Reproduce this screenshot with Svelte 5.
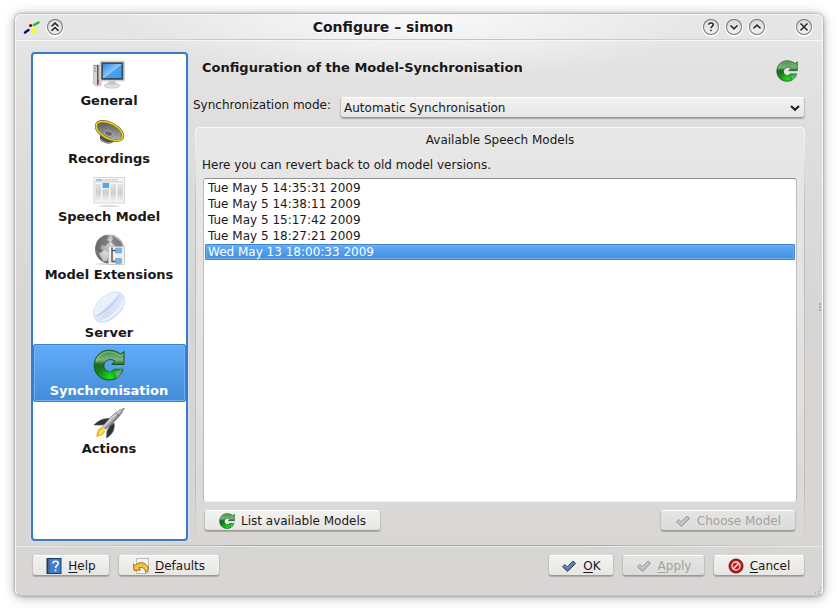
<script>
  let page = $state('Synchronisation');
  let model = $state(4);
  let mode = $state('Automatic Synchronisation');

  const pages = ['General', 'Recordings', 'Speech Model', 'Model Extensions', 'Server', 'Synchronisation', 'Actions'];
  const models = [
    'Tue May 5 14:35:31 2009',
    'Tue May 5 14:38:11 2009',
    'Tue May 5 15:17:42 2009',
    'Tue May 5 18:27:21 2009',
    'Wed May 13 18:00:33 2009'
  ];
</script>

<svg class="defs" width="0" height="0" aria-hidden="true">
  <defs>
    <linearGradient id="green" x1="0" y1="0" x2="0" y2="1">
      <stop offset="0" stop-color="#3f8a46" /><stop offset=".32" stop-color="#79b57a" />
      <stop offset=".48" stop-color="#1d6a20" /><stop offset="1" stop-color="#119611" />
    </linearGradient>
    <radialGradient id="glow" cx="17" cy="28" r="13" gradientUnits="userSpaceOnUse">
      <stop offset="0" stop-color="#1ee01e" /><stop offset="1" stop-color="#1ec01e" stop-opacity="0" />
    </radialGradient>
    <linearGradient id="screen" x1="0" y1="0" x2="1" y2="1">
      <stop offset="0" stop-color="#2f86dc" /><stop offset=".5" stop-color="#8cc6f8" /><stop offset=".55" stop-color="#4ba0ee" /><stop offset="1" stop-color="#3c9af2" />
    </linearGradient>
    <linearGradient id="cone" x1="0" y1="0" x2="1" y2="1">
      <stop offset="0" stop-color="#45454a" /><stop offset=".6" stop-color="#8f8f94" /><stop offset="1" stop-color="#c4c4c8" />
    </linearGradient>
    <linearGradient id="column" x1="0" y1="0" x2="0" y2="1">
      <stop offset="0" stop-color="#e4e4e4" /><stop offset=".5" stop-color="#cfcfcf" /><stop offset="1" stop-color="#f0f0f0" />
    </linearGradient>
    <radialGradient id="globe" cx=".6" cy=".3" r=".7">
      <stop offset="0" stop-color="#dedede" /><stop offset=".6" stop-color="#a5a5a5" /><stop offset="1" stop-color="#686868" />
    </radialGradient>
    <linearGradient id="glass" x1="0" y1="0" x2="1" y2="1">
      <stop offset="0" stop-color="#eef3fd" /><stop offset=".5" stop-color="#d3dff5" /><stop offset="1" stop-color="#e6edfa" />
    </linearGradient>
    <linearGradient id="metal" x1="0" y1="0" x2="1" y2="1">
      <stop offset=".25" stop-color="#55565b" /><stop offset=".45" stop-color="#d2d4d9" /><stop offset=".65" stop-color="#3a3b40" />
    </linearGradient>
  </defs>
</svg>

{#snippet refresh(size)}
  <svg width={size} height={size} viewBox="0 0 32 32" aria-hidden="true">
    <path d="M31 2.500V15.500H18.500L22 12C16.500 8.500 10.800 12 10.800 17C10.800 22.400 17.500 24.200 21 19.800H30C29 26.500 23 31 16.200 31C7.600 31 1.200 25 1.200 16.400C1.200 7.600 7.600 1.200 16 1.200C20.600 1.200 24.400 2.600 27.500 5Z" fill="url(#green)" />
    <path d="M2 17C5 20 11 19.500 11.300 19C13 23 18.500 23.800 21.500 20.500H29.400C28 27 23 30.400 16.200 30.400C8.400 30.400 2 25 2 17Z" fill="url(#glow)" />
    <path d="M30 19.800C29 26.500 23 31 16.200 31C7.600 31 1.200 25 1.200 16.400C1.200 7.600 7.600 1.200 16 1.200C20.600 1.200 24.400 2.600 27.500 5L31 2.500V15.500H18.500L22 12C16.500 8.500 10.800 12 10.800 17C10.800 20 13 21.800 15 22.200" fill="none" stroke="#14591a" />
    <path d="M3 13C5 5.500 12 1.800 18 3C22 3.700 25 5.500 27.500 7L30 5" fill="none" stroke="#b4d8b0" stroke-opacity=".5" />
    <path d="M22 23L29.500 19.800C29 24 27 27 24 29Z" fill="#9fc7c2" opacity=".5" />
  </svg>
{/snippet}

{#snippet check(a, b)}
  <svg width="16" height="16" viewBox="0 0 16 16" aria-hidden="true">
    <path d="M1.500 8.800L3.800 6.500L6.300 8.900L12 3L14.600 5.400L6.500 13.600Z" fill={a} stroke={b} stroke-linejoin="round" />
    <path d="M3 8.600L3.900 7.700L6.400 10.200L12.100 4.300" fill="none" stroke="#fff" stroke-opacity=".3" />
  </svg>
{/snippet}

{#snippet pageIcon(name)}
  {#if name === 'Synchronisation'}
    {@render refresh(32)}
  {:else}
    <svg width="32" height="32" viewBox="0 0 32 32" aria-hidden="true">
      {#if name === 'General'}
        <path d="M.500 6H8V26L4 27.500L.500 25Z" fill="#d4d4d4" stroke="#aaa" stroke-width=".600" />
        <path d="M1 7H4M1 9.500H3M1 12H3" stroke="#777" stroke-width=".800" />
        <path d="M4.800 6V26" stroke="#333" stroke-width="1.200" /><path d="M5 21V24" stroke="#c22" />
        <ellipse cx="19" cy="26.600" rx="8" ry="2.600" fill="#dedede" stroke="#bbb" stroke-width=".600" />
        <path d="M16 21H22L23 26H15Z" fill="#c8c8c8" />
        <rect x="7" y="2" width="24.500" height="20" rx=".800" fill="#dcdcd9" stroke="#b8b8b5" stroke-width=".600" />
        <rect x="8.300" y="3.300" width="22" height="17.500" fill="#37495c" />
        <rect x="10" y="5" width="18.500" height="14" fill="url(#screen)" />
      {:else if name === 'Recordings'}
        <path d="M7 17V22C9 27 20 28 21 24V20Z" fill="#505055" />
        <path d="M8 22C11 26 17 27 20 25" fill="none" stroke="#aaa" />
        <ellipse cx="16.500" cy="14" rx="14.600" ry="7.600" transform="rotate(28 16.500 14)" fill="url(#cone)" stroke="#75620c" stroke-width="2.600" />
        <ellipse cx="16.500" cy="14" rx="14.500" ry="7.500" transform="rotate(28 16.500 14)" fill="none" stroke="#ead42b" stroke-width="1.600" />
        <ellipse cx="15.500" cy="16.500" rx="4.200" ry="2.600" transform="rotate(18 15.500 16.500)" fill="#66676c" stroke="#b6b6b6" stroke-width=".800" />
      {:else if name === 'Speech Model'}
        <ellipse cx="16" cy="31" rx="11" ry=".800" fill="#ccc" />
        <rect x="1" y="2.500" width="30.500" height="25.500" fill="#f6f6f6" stroke="#ccc" stroke-width=".800" />
        <path d="M3 5H9" stroke="#5da2dd" stroke-width="1.200" /><path d="M10 5H25" stroke="#aaa" stroke-dasharray="1.500 .700" /><path d="M2 7H30" stroke="#ccc" />
        <path d="M2.500 9H8V26H2.500ZM9.500 14H16V26H9.500ZM17.500 9H23V26H17.500ZM24.500 9H30V26H24.500Z" fill="url(#column)" />
        <rect x="9.500" y="8" width="6.500" height="5" fill="#62a2dc" />
      {:else if name === 'Model Extensions'}
        <ellipse cx="15" cy="31" rx="13" ry="1" fill="#ddd" />
        <circle cx="16.500" cy="16" r="14.500" fill="url(#globe)" />
        <path d="M4 8C7 4 10 3 12 2L16 3L14 7L17 9L12 13L9 12L7 15L10 18L9 22L5 20L2.500 15Z" fill="#575757" opacity=".65" />
        <path d="M19 2.500L23 5L28 9L30 15L22 13L18 9L20 6Z" fill="#505050" opacity=".6" /><path d="M6 20L12 17L16 20L14 28L10 28Z" fill="#f0f0f0" opacity=".65" />
        <rect x="15.500" y="13.500" width="16" height="18" fill="#eee" stroke="#bcbcbc" stroke-width=".700" />
        <path d="M19 14.500V28.500H23M19 17.500H23" fill="none" stroke="#555" stroke-width="1.400" />
        <rect x="22.500" y="15" width="6" height="5" rx=".700" fill="#7db2e8" stroke="#5d8fc4" stroke-width=".500" /><rect x="22.500" y="25.500" width="6" height="5" rx=".700" fill="#7db2e8" stroke="#5d8fc4" stroke-width=".500" />
      {:else if name === 'Server'}
        <g transform="rotate(-43 16 16)">
          <ellipse cx="16" cy="16" rx="18.500" ry="11.500" fill="url(#glass)" stroke="#cdd8ee" stroke-width=".700" />
          <path d="M-1 13C4 19 27 19 33 13C29 6 22 5 16 5C10 5 3 6 -1 13Z" fill="#e9effb" />
          <path d="M-1.500 13C5 19 27 19 33.500 13C25 15.500 8 15.500 -1.500 13Z" fill="#c3d1ee" />
          <path d="M1 21C9 26 23 26 31 21" fill="none" stroke="#fff" stroke-width="1.500" opacity=".7" />
        </g>
      {:else}
        <path d="M9 20C5 21 4 25 3 30C7 29 11 28 12 24Z" fill="#f6b21b" /><path d="M9 22C7 23 6 25 5.500 28C9 27 10 26 11 23Z" fill="#ffe94e" />
        <path d="M17 11.500C9 11 4 15 1 18L9 18L15 16ZM21 16C22 22 20 27 13.500 31L14 24L17 19Z" fill="#303136" stroke="#55565b" stroke-width=".700" />
        <path d="M31.500 1C25 3 20 7 16 12L9.500 19.500L12.500 22.500L19 17C25 11 29 7 31.500 1Z" fill="url(#metal)" stroke="#6a6b70" stroke-width=".500" />
        <path d="M23 6L26 9" stroke="#555" stroke-width=".800" />
      {/if}
    </svg>
  {/if}
{/snippet}

{#snippet round(label, d)}
  <button class="round" aria-label={label}>
    <svg width="16" height="16" viewBox="0 0 16 16" aria-hidden="true">
      <path {d} fill="none" stroke="#fff" stroke-width="2" transform="translate(0 1)" />
      <path {d} fill="none" stroke="#252525" stroke-width="1.600" />
    </svg>
  </button>
{/snippet}

<div class="desktop">
  <section class="dialog" aria-label="Configure – simon">
    <header class="titlebar">
      <div class="side">
        <svg width="18" height="16" viewBox="0 0 18 16" aria-hidden="true">
          <path d="M2 13.500L5.500 11" stroke="#080870" stroke-width="2.400" stroke-linecap="round" />
          <path d="M11 6L15.500 3.500" stroke="#0bc522" stroke-width="2.400" stroke-linecap="round" />
          <circle cx="7.600" cy="6.500" r="1.600" fill="#7c0808" /><path d="M8.500 11.500L10 9L13 11L12 14H9Z" fill="#f8f82c" stroke="#f8f82c" stroke-linejoin="round" />
        </svg>
        {@render round('Shade', 'M4.500 7.500L8 4.200L11.500 7.500M4.500 11.800L8 8.500L11.500 11.800')}
      </div>
      <h1>Configure – simon</h1>
      <div class="side right">
        {@render round('Help', 'M5.800 5.800C5.800 3.300 10.200 3.300 10.200 5.800C10.200 7.300 8 7.300 8 9.300M8 10.800V12.300')}
        {@render round('Minimize', 'M4.500 6.500L8 9.800L11.500 6.500')}
        {@render round('Maximize', 'M4.500 9.500L8 6.200L11.500 9.500')}
        <span class="gap"></span>
        {@render round('Close', 'M4.500 4.500L11.500 11.500M11.500 4.500L4.500 11.500')}
      </div>
    </header>

    <div class="body">
      <nav>
        {#each pages as name}
          <button class="page" class:active={page === name} onclick={() => (page = name)}>
            {@render pageIcon(name)}
            <span>{name}</span>
          </button>
        {/each}
      </nav>

      <main>
        <div class="heading">
          <h2>Configuration of the Model-Synchronisation</h2>
          {@render refresh(22)}
        </div>
        <div class="mode">
          <label for="mode">Synchronization mode:</label>
          <div class="combo">
            <select id="mode" bind:value={mode}>
              <option>Automatic Synchronisation</option>
              <option>Manual Synchronisation</option>
            </select>
            <svg width="12" height="8" viewBox="0 0 12 8" aria-hidden="true"><path d="M2 2L6 5.800L10 2" fill="none" stroke="#222" stroke-width="2.200" /></svg>
          </div>
        </div>
        <section class="group" aria-labelledby="group-title">
          <h3 id="group-title">Available Speech Models</h3>
          <p>Here you can revert back to old model versions.</p>
          <div class="list">
            {#each models as name, i}
              <button class="row" class:active={model === i} onclick={() => (model = i)}>{name}</button>
            {/each}
          </div>
          <div class="actions">
            <button class="push wide">{@render refresh(16)}List available Models</button>
            <button class="push wide" disabled>{@render check('#bdbdbd', '#989898')}Choose Model</button>
          </div>
        </section>
      </main>
      <span class="grip" aria-hidden="true"></span>
    </div>

    <footer>
      <button class="push help">
        <svg width="16" height="16" viewBox="0 0 16 16" aria-hidden="true">
          <rect x="1" y=".500" width="14" height="15" fill="#3f7fd0" stroke="#1c3c6c" /><rect x="1" y="1" width="3" height="14.500" fill="#243c5c" /><path d="M3 1V15" stroke="#7690b0" />
          <path d="M7 5.500C7 2.500 12.200 2.500 12.200 5.500C12.200 7.500 9.600 7.500 9.600 10M9.600 11.500V13.300" fill="none" stroke="#fff" stroke-width="1.600" />
        </svg>
        <span><u>H</u>elp</span>
      </button>
      <button class="push defaults">
        <svg width="16" height="16" viewBox="0 0 16 16" aria-hidden="true">
          <path d="M3.500 .500H15.500V14L13 15.500H3.500Z" fill="#f3f3f3" stroke="#bbb" />
          <path d="M.600 6L2.500 7.500C5 3.500 13 3.500 15.300 10C15.300 12.500 14 14 12.500 14.500C13 11 9 8.500 6 9.800L7.500 12L1 12.500Z" fill="#f4c33c" stroke="#a36d10" stroke-linejoin="round" />
        </svg>
        <span><u>D</u>efaults</span>
      </button>
      <span class="spacer"></span>
      <button class="push ok">{@render check('#56799c', '#28435f')}<span><u>O</u>K</span></button>
      <button class="push apply" disabled>{@render check('#bdbdbd', '#989898')}<span><u>A</u>pply</span></button>
      <button class="push cancel">
        <svg width="16" height="16" viewBox="0 0 16 16" aria-hidden="true">
          <circle cx="8" cy="8" r="7" fill="#c01a16" stroke="#7c0c0a" />
          <circle cx="8" cy="8" r="4" fill="none" stroke="#f4e4e2" stroke-width="1.300" /><path d="M5 11L11 5" stroke="#f4e4e2" stroke-width="1.600" />
        </svg>
        <span><u>C</u>ancel</span>
      </button>
    </footer>
    <svg class="corner" width="8" height="8" viewBox="0 0 8 8" aria-hidden="true"><path d="M1 6H2M4 4H5M6 1H7M4 7H5M6 5H7" stroke="#999" /></svg>
  </section>
</div>

<style>
  :global(body) { background: #fff; }
  .defs { position: absolute; }
  .desktop {
    box-sizing: border-box;
    min-height: 100vh;
    padding: 14px 14px 15px 15px;
    display: flex;
    font: 12px/16px "DejaVu Sans", sans-serif;
    color: #1a1718;
  }
  button, select { font: inherit; color: inherit; margin: 0; }
  button { border: 0; padding: 0; background: none; }
  svg { flex: none; display: block; }
  .dialog {
    position: relative;
    box-sizing: border-box;
    flex: 1;
    display: flex;
    flex-direction: column;
    min-width: 0;
    border: 1px solid #f5f5f5;
    border-bottom-color: #c4c4c4;
    border-radius: 6px;
    background:
      radial-gradient(ellipse 300px 64px at 50% 0, #fafafa, #fafafa00),
      linear-gradient(#e6e6e6, #dfdedd 120px, #d7d6d4 300px);
    box-shadow: 0 0 3px #888, 0 1px 12px #aaa;
  }
  .titlebar {
    display: grid;
    grid-template-columns: auto 1fr auto;
    align-items: center;
    height: 24px;
    padding: 0 10px 0 7px;
    border-bottom: 1px solid;
    border-image: linear-gradient(90deg, #e0e0e0, #c4c4c4 30%, #c4c4c4 70%, #e0e0e0) 1;
    box-shadow: 0 1px #f6f6f6;
  }
  h1, h2, h3, p { margin: 0; font-size: inherit; }
  h1 { font-size: 14px; text-align: center; text-shadow: 0 1px #fff; }
  h2 { font-size: 13px; }
  .side { display: flex; align-items: center; gap: 6px; }
  .right { justify-content: flex-end; gap: 7px; }
  .gap { width: 17px; }
  .round {
    width: 16px;
    height: 16px;
    border-radius: 50%;
    background: linear-gradient(#dadada, #f0f0f0);
    box-shadow: inset 0 0 0 1px #757575, 0 1px 0 1px #fff;
  }
  .body {
    position: relative;
    flex: 1;
    display: flex;
    gap: 7px;
    padding: 12px 17px 4px 15px;
  }
  nav {
    box-sizing: border-box;
    width: 157px;
    display: flex;
    flex-direction: column;
    border: 2px solid #3c7ac6;
    border-radius: 4px;
    background: #fff;
    box-shadow: 0 0 0 1px #d6dfec;
  }
  .page {
    height: 58px;
    display: flex;
    flex-direction: column;
    align-items: center;
    gap: 2px;
    padding: 5px 1px 0 0;
    box-sizing: border-box;
    font-size: 13px;
    font-weight: bold;
    border-radius: 3px;
  }
  .active {
    color: #fff;
    background: linear-gradient(#62adfb, #438bd7);
    box-shadow: inset 0 0 0 1px #3e7fc8, inset 0 0 0 2px #70b2f5;
  }
  main { flex: 1; display: flex; flex-direction: column; min-width: 0; }
  .heading {
    display: flex;
    justify-content: space-between;
    align-items: center;
    height: 38px;
    padding: 0 7px;
  }
  .heading h2 { padding-bottom: 6px; }
  .mode { display: flex; align-items: flex-start; gap: 9px; margin: 7px 0 9px -2px; }
  .combo { flex: 1; display: grid; align-items: center; }
  .combo > * { grid-area: 1 / 1; }
  .combo svg { justify-self: end; margin-right: 4px; pointer-events: none; }
  select, .push {
    box-sizing: border-box;
    height: 21px;
    border: 1px solid #c3c2c1;
    border-top-color: #fff;
    border-bottom-color: #9a9998;
    border-radius: 4px;
    background: linear-gradient(#f2f2f1, #e7e6e4);
    box-shadow: 0 1px 1px #aaa9a8;
  }
  select { appearance: none; width: 100%; padding: 0 20px 0 3px; }
  .group {
    flex: 1;
    display: flex;
    flex-direction: column;
    padding: 4px 7px 10px;
    border: 1px solid transparent;
    border-bottom: 0;
    border-radius: 5px;
    background:
      linear-gradient(#e7e7e7, #e2e1e0 60%, #d8d7d5) padding-box,
      linear-gradient(#fafafa, #bdbcbb 20%, #bdbcbb 85%, #d7d6d4) border-box;
  }
  h3 { font-weight: normal; text-align: center; }
  .group p { margin: 9px 0 5px -1px; }
  .list {
    flex: 1;
    display: flex;
    flex-direction: column;
    padding: 1px;
    border: 1px solid #bcbbba;
    border-top-color: #8f8f8f;
    border-bottom-color: #eee;
    border-radius: 3px;
    background: #fff;
  }
  .row { height: 16px; text-align: left; padding: 0 3px; border-radius: 2px; }
  .actions { display: flex; justify-content: space-between; margin: 8px 1px 0; }
  .push { display: flex; align-items: center; justify-content: center; gap: 6px; white-space: nowrap; }
  .push:disabled { color: #a3a2a1; background: linear-gradient(#e4e4e3, #dddcda); }
  .wide { padding: 0 14px; }
  u { text-underline-offset: 2px; }
  footer {
    display: flex;
    gap: 8px;
    padding: 9px 17px 19px 16px;
    border-top: 1px solid;
    border-image: linear-gradient(90deg, #d7d6d4, #aaa 30%, #aaa 70%, #d7d6d4) 1;
    box-shadow: inset 0 1px #e8e8e7;
  }
  .spacer { flex: 1; }
  .help { width: 78px; }
  .defaults { width: 102px; }
  .ok { width: 66px; }
  .apply { width: 83px; }
  .cancel { width: 92px; }
  .grip {
    position: absolute;
    right: 1px;
    top: 52%;
    height: 8px;
    border-left: 2px dotted #aaa;
  }
  .corner { position: absolute; right: 0; bottom: 0; }
</style>
